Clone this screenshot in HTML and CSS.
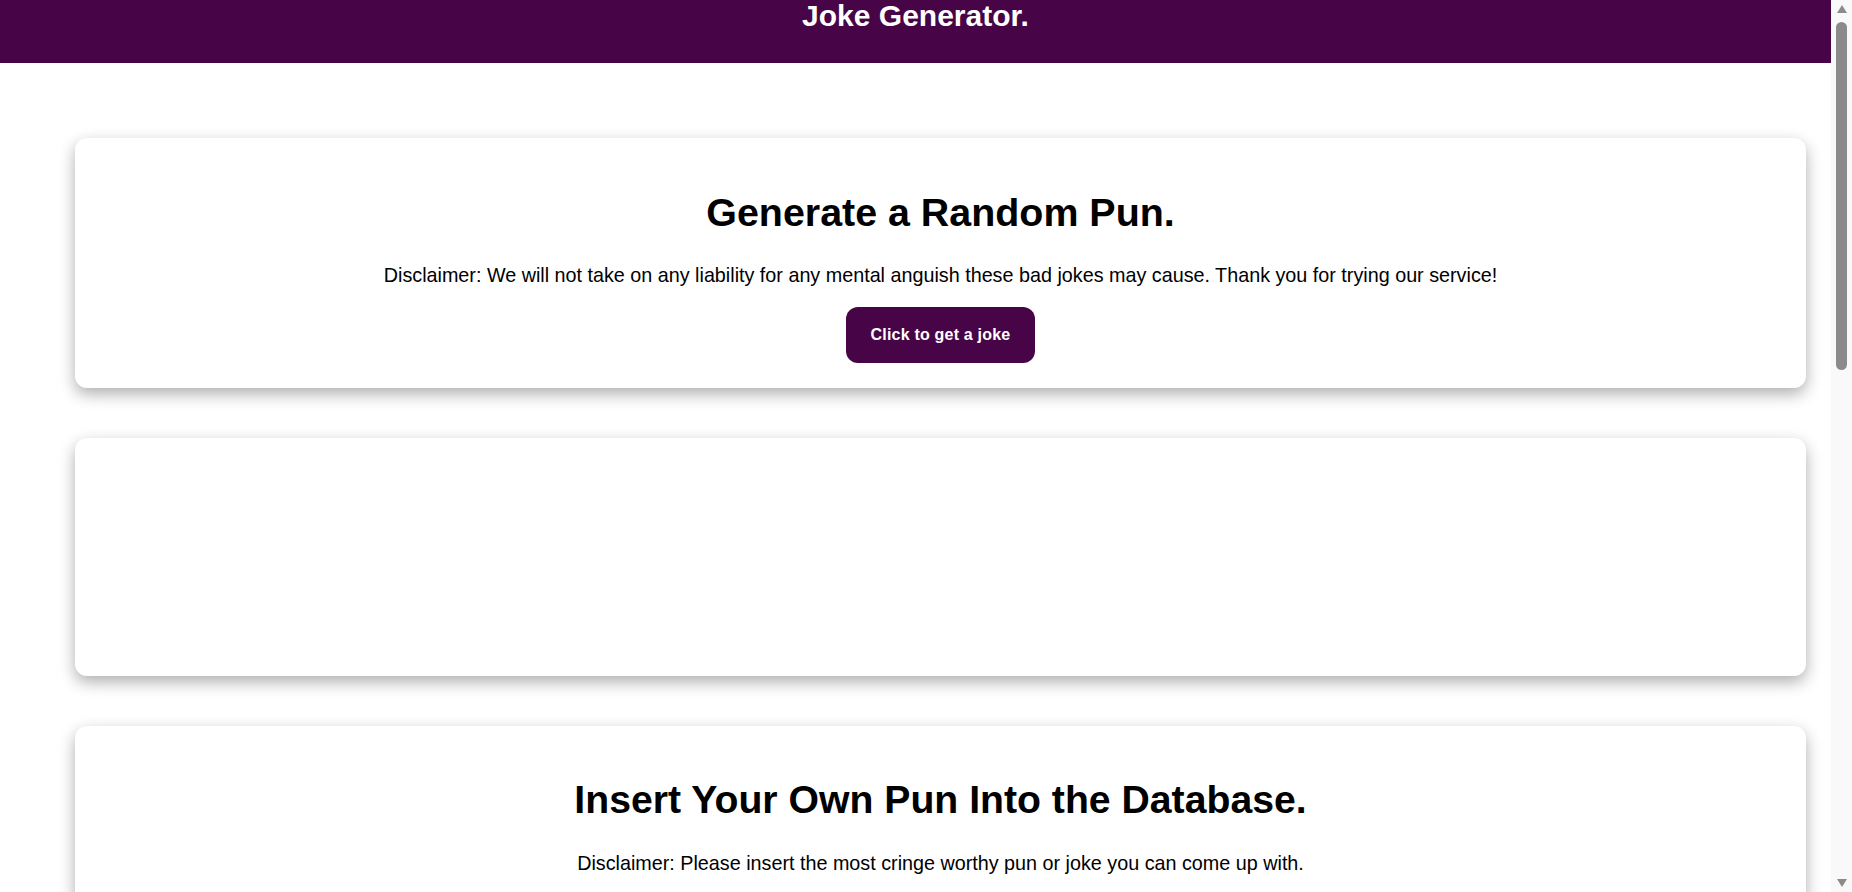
FILE: index.html
```html
<!DOCTYPE html>
<html lang="en">
<head>
<meta charset="utf-8">
<title>Joke Generator.</title>
<link rel="stylesheet" href="styles.css">
</head>
<body>
<div class="viewport">
  <header class="site-header">
    <h1 class="site-title">Joke Generator.</h1>
  </header>
  <main class="content">
    <section class="card card-intro">
      <h2 class="card-title">Generate a Random Pun.</h2>
      <p class="card-text">Disclaimer: We will not take on any liability for any mental anguish these bad jokes may cause. Thank you for trying our service!</p>
      <button class="btn" type="button">Click to get a joke</button>
    </section>
    <section class="card card-joke"></section>
    <section class="card card-insert">
      <h2 class="card-title card-title-long">Insert Your Own Pun Into the Database.</h2>
      <p class="card-text">Disclaimer: Please insert the most cringe worthy pun or joke you can come up with.</p>
    </section>
  </main>
</div>
<div class="scrollbar" aria-hidden="true">
  <span class="sb-arrow sb-arrow-up"></span>
  <span class="sb-thumb"></span>
  <span class="sb-track-rest"></span>
  <span class="sb-arrow sb-arrow-down"></span>
</div>
</body>
</html>
```

FILE: styles.css
```css
html, body {
  margin: 0;
  padding: 0;
  height: 100%;
}

body {
  display: flex;
  height: 100vh;
  overflow: hidden;
  font-family: "Liberation Sans", Arial, sans-serif;
  color: #000;
  background: #fff;
}

.viewport {
  flex: 1;
  min-width: 0;
  overflow: hidden;
}

.scrollbar {
  flex: none;
  width: 21px;
  display: flex;
  flex-direction: column;
  align-items: center;
  padding: 5px 0;
  box-sizing: border-box;
  background: #f9f9f9;
}

.sb-arrow {
  width: 0;
  height: 0;
  border-left: 5.5px solid transparent;
  border-right: 5.5px solid transparent;
}

.sb-arrow-up {
  border-bottom: 8px solid #8b8b8b;
}

.sb-arrow-down {
  border-top: 8px solid #8b8b8b;
}

.sb-thumb {
  width: 11px;
  height: 348px;
  margin-top: 9px;
  border-radius: 6px;
  background: #8b8b8b;
}

.sb-track-rest {
  flex: 1;
}

.site-header {
  height: 63px;
  background: #470446;
  color: #fff;
  text-align: center;
}

.site-title {
  margin: 0;
  font-size: 30px;
  line-height: 32px;
  font-weight: bold;
}

.content {
  display: flex;
  flex-direction: column;
  gap: 50px;
  padding: 75px 25px 75px 75px;
}

.card {
  box-sizing: border-box;
  background: #fff;
  border-radius: 12px;
  box-shadow: 0 6px 16px rgba(0, 0, 0, 0.32);
  padding: 20px 20px 25px;
  text-align: center;
}

.card-title {
  margin: 31px 0 0;
  font-size: 39.4px;
  line-height: 46px;
  font-weight: bold;
}

.card-title-long {
  font-size: 39.2px;
}

.card-text {
  margin: 29px 0 0;
  font-size: 19.75px;
  line-height: 22px;
}

.btn {
  margin-top: 21px;
  height: 56px;
  padding: 0 25px;
  border: none;
  border-radius: 12px;
  background: #470446;
  color: #fff;
  font-family: "Liberation Sans", Arial, sans-serif;
  font-size: 16px;
  font-weight: bold;
  letter-spacing: 0.2px;
}

.card-joke {
  min-height: 238px;
}

.card-insert {
  min-height: 400px;
}
```
